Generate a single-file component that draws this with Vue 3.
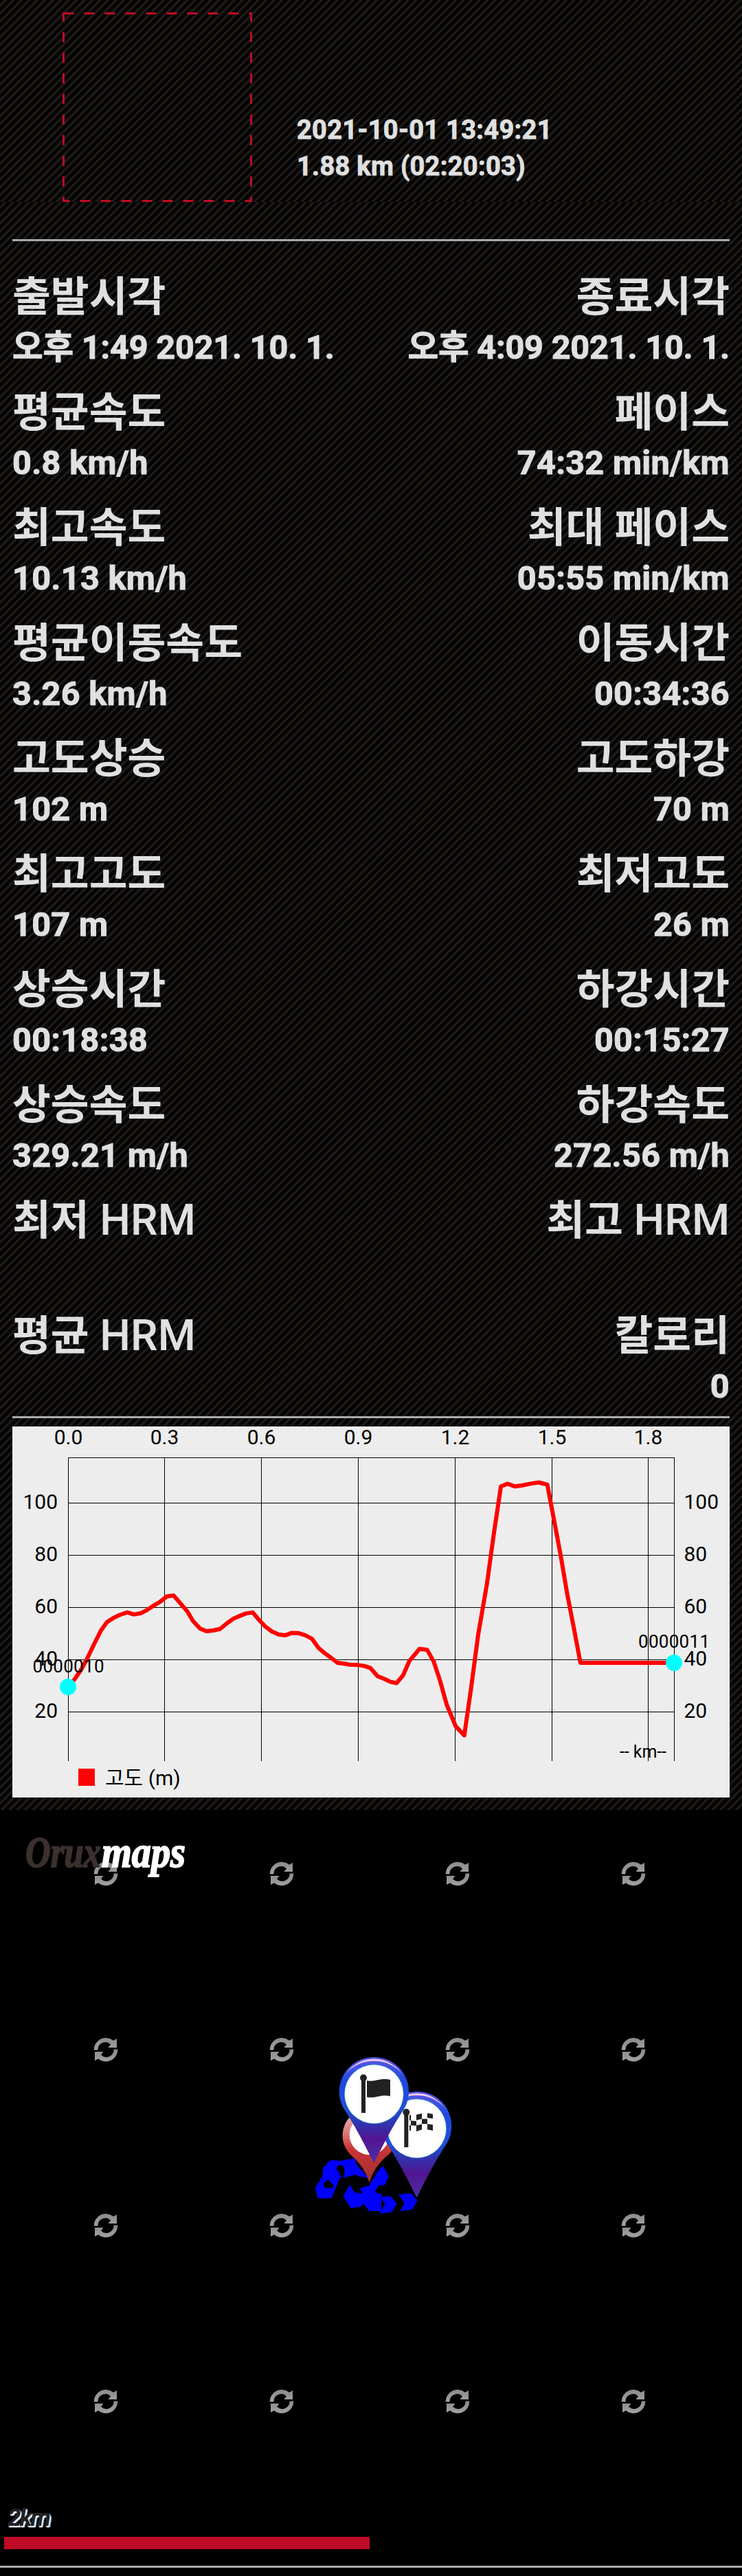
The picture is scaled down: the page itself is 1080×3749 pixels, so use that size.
<script setup>
import { computed } from 'vue';

const resumen = {
    fecha: '2021-10-01 13:49:21',
    distancia: '1.88 km (02:20:03)'
};

const filas = [
    [{ nombre: '출발시각', valor: '오후 1:49 2021. 10. 1.' }, { nombre: '종료시각', valor: '오후 4:09 2021. 10. 1.' }],
    [{ nombre: '평균속도', valor: '0.8 km/h' }, { nombre: '페이스', valor: '74:32 min/km' }],
    [{ nombre: '최고속도', valor: '10.13 km/h' }, { nombre: '최대 페이스', valor: '05:55 min/km' }],
    [{ nombre: '평균이동속도', valor: '3.26 km/h' }, { nombre: '이동시간', valor: '00:34:36' }],
    [{ nombre: '고도상승', valor: '102 m' }, { nombre: '고도하강', valor: '70 m' }],
    [{ nombre: '최고고도', valor: '107 m' }, { nombre: '최저고도', valor: '26 m' }],
    [{ nombre: '상승시간', valor: '00:18:38' }, { nombre: '하강시간', valor: '00:15:27' }],
    [{ nombre: '상승속도', valor: '329.21 m/h' }, { nombre: '하강속도', valor: '272.56 m/h' }],
    [{ nombre: '최저', sigla: 'HRM', valor: '' }, { nombre: '최고', sigla: 'HRM', valor: '' }],
    [{ nombre: '평균', sigla: 'HRM', valor: '' }, { nombre: '칼로리', valor: '0' }]
];

const ejeX = [
    { x: 81.5, texto: '0.0' },
    { x: 221.5, texto: '0.3' },
    { x: 362.5, texto: '0.6' },
    { x: 503.5, texto: '0.9' },
    { x: 644.5, texto: '1.2' },
    { x: 785.5, texto: '1.5' },
    { x: 925.5, texto: '1.8' }
];

const ejeY = [
    { y: 111.5, texto: '100' },
    { y: 187.5, texto: '80' },
    { y: 263.5, texto: '60' },
    { y: 339.5, texto: '40' },
    { y: 415.5, texto: '20' }
];

const perfil = [
    [81.2, 378.9], [90.5, 368.1], [100.8, 352.8], [109.4, 336.8], [119.1, 316.5], [128.7, 297.3], [137.7, 284.7],
    [147.3, 278.6], [156.9, 274], [167.3, 270.6], [176.9, 273.6], [187.3, 271.7], [196.2, 267.1], [205.9, 260.6],
    [215.5, 254.9], [225.1, 247.2], [234.8, 246.1], [244.4, 257.2], [254.8, 269.4], [263, 283.2], [273, 293.9],
    [282.6, 298.1], [291.9, 297], [302.3, 294.7], [312.6, 286.3], [321.2, 280.1], [330.5, 275.9], [340.2, 272.1],
    [349.8, 270.6], [358.8, 281.3], [367.7, 290.8], [378, 298.5], [387.7, 302.7], [397.3, 303.9], [407, 300.4],
    [416.6, 300.8], [426.3, 303.9], [435.9, 308.8], [445.5, 322.2], [454.5, 329.9], [464.1, 336.8], [473.4, 344],
    [483.1, 345.2], [491.7, 346.7], [502.7, 347.1], [512.3, 348.6], [521.3, 351.7], [531.6, 363.5], [540.6, 367],
    [550.2, 371.6], [559.2, 373.5], [568.8, 362], [577.8, 341.4], [592.6, 323.8], [603.6, 324.9], [613.3, 342.1],
    [622.6, 370.4], [632.2, 404.9], [645.3, 436.3], [657.8, 449.6], [667.7, 380.8], [678, 303.1], [690.7, 229.6],
    [700.4, 158.8], [711.1, 87.3], [720.7, 83.4], [731.7, 87.3], [742.4, 85.7], [755.1, 83.1], [766.2, 81.5],
    [778.6, 84.6], [788.2, 135.1], [798.2, 188.3], [807.8, 244.9], [817.8, 296.2], [826.8, 344], [963, 344]
];

const puntos = computed(() => perfil.map((p) => p.join(',')).join(' '));
</script>

<template>
    <div class="pantalla">
        <div class="panel">
            <header class="cabecera">
                <svg class="marco" width="276" height="276" viewBox="0 0 276 276">
                    <rect x="1.5" y="1.5" width="273" height="273" fill="none" stroke="#be0b26" stroke-width="3" stroke-dasharray="15 15" />
                </svg>
                <div class="resumen">
                    <p>{{ resumen.fecha }}</p>
                    <p>{{ resumen.distancia }}</p>
                </div>
            </header>
            <hr class="linea">

            <div class="datos">
                <div class="fila" v-for="(fila, i) in filas" :key="i">
                    <div class="dato" v-for="dato in fila" :key="dato.nombre">
                        <div class="nombre">{{ dato.nombre }}<span class="sigla" v-if="dato.sigla">&nbsp;{{ dato.sigla }}</span></div>
                        <div class="valor">{{ dato.valor }}</div>
                    </div>
                </div>
            </div>
            <hr class="linea">

            <svg class="grafica" width="1044" height="540" viewBox="0 0 1044 540">
                <g stroke="#000" stroke-width="1" shape-rendering="crispEdges">
                    <line x1="81" y1="45.5" x2="964" y2="45.5" />
                    <line v-for="m in ejeY" :key="m.texto" x1="81" :y1="m.y" x2="964" :y2="m.y" />
                    <line v-for="m in ejeX" :key="m.texto" :x1="m.x" y1="45" :x2="m.x" y2="487" />
                    <line x1="963.5" y1="45" x2="963.5" y2="487" />
                </g>
                <g class="escala">
                    <text v-for="m in ejeX" :key="m.texto" :x="m.x" y="26" text-anchor="middle">{{ m.texto }}</text>
                    <text v-for="m in ejeY" :key="m.texto" x="66" :y="m.y + 8.5" text-anchor="end">{{ m.texto }}</text>
                    <text v-for="m in ejeY" :key="m.texto" x="977.5" :y="m.y + 8.5">{{ m.texto }}</text>
                </g>
                <polyline :points="puntos" fill="none" stroke="#f00" stroke-width="6" stroke-linejoin="round" />
                <circle cx="81" cy="379" r="12" fill="#0ff" />
                <circle cx="963" cy="344" r="12" fill="#0ff" />
                <text class="punto" x="81.5" y="358" text-anchor="middle" textLength="104">0000010</text>
                <text class="punto" x="963" y="322" text-anchor="middle" textLength="104">0000011</text>
                <text class="unidad" x="884" y="482" textLength="68">-- km--</text>
                <rect x="96" y="498" width="24" height="25" fill="#f00" />
                <text class="leyenda" x="135" y="522">고도 (m)</text>
            </svg>
        </div>

        <div class="mapa">
            <div class="teselas">
                <svg v-for="n in 16" :key="n" width="36" height="36" viewBox="-18 -18 36 36">
                    <defs>
                        <linearGradient id="gris" x1="0" y1="0" x2="0" y2="1">
                            <stop offset="0" stop-color="#8a8a8a" />
                            <stop offset="1" stop-color="#a2a2a2" />
                        </linearGradient>
                    </defs>
                    <g fill="url(#gris)">
                        <path d="M-17.3 .5A17.3 17.3 0 0 1 11-13.2L16-16V-3H3.5L7-7.6A10.8 10.8 0 0 0-11.5 .5Z" />
                        <path d="M17.3-.5A17.3 17.3 0 0 1-11 13.2L-16 16V3H-3.5L-7 7.6A10.8 10.8 0 0 0 11.5-.5Z" />
                    </g>
                </svg>
            </div>

            <svg class="logo" width="260" height="80" viewBox="0 0 260 80">
                <text x="3" y="53" fill="#3a302d" stroke="#3a302d" textLength="110" lengthAdjust="spacingAndGlyphs">Orux</text>
                <text x="114" y="53" fill="#fff" stroke="#fff" textLength="122" lengthAdjust="spacingAndGlyphs">maps</text>
            </svg>

            <svg class="marcas" width="240" height="270" viewBox="0 0 720 810">
                <defs>
                    <linearGradient id="azul" x1="0" y1="0" x2="0" y2="1">
                        <stop offset="0" stop-color="#5a5ae0" />
                        <stop offset=".22" stop-color="#2348e0" />
                        <stop offset=".5" stop-color="#1d4fd6" />
                        <stop offset=".62" stop-color="#2f35b0" />
                        <stop offset=".77" stop-color="#521591" />
                        <stop offset="1" stop-color="#4b2ea6" />
                    </linearGradient>
                    <linearGradient id="rojo" x1="0" y1="0" x2="0" y2="1">
                        <stop offset="0" stop-color="#f2c4c4" />
                        <stop offset=".3" stop-color="#dc8080" />
                        <stop offset=".55" stop-color="#c93434" />
                        <stop offset="1" stop-color="#a03030" />
                    </linearGradient>
                    <linearGradient id="brillo" x1="0" y1="0" x2="0" y2="1">
                        <stop offset="0" stop-color="#ffd0f6" />
                        <stop offset=".5" stop-color="#e0b0f0" />
                        <stop offset="1" stop-color="#3a6cf0" />
                    </linearGradient>
                    <g id="pin">
                        <path d="M0-152A150 150 0 0 1 130 76C95 130 70 170 0 311C-70 170-95 130-130 76A150 150 0 0 1 0-152Z" fill="url(#azul)" />
                        <path d="M-128-72A149 149 0 0 1 128-72A158 154 0 0 0-128-72Z" fill="url(#brillo)" />
                        <circle cx="0" cy="9" r="129" fill="#fff" stroke="#2a86c0" stroke-width="2" />
                        <rect x="-55" y="-62" width="18" height="153" fill="#222" />
                        <circle cx="-46" cy="-62" r="15" fill="#222" />
                    </g>
                </defs>
                <g fill="#00f">
                    <path d="M91 556L122 521L168 524L228 514L240 545L290 600L246 592L236 584L182 598L176 592L162 604L128 688L68 688L56 645L88 590Z" />
                    <path d="M206 628L228 662L264 667L250 645L292 632L330 570L352 546L378 592L360 630L334 632L318 655L328 668L350 668L346 682L384 678L413 710L392 748L338 755L342 744L292 743L266 710L258 724L212 731L180 680Z" />
                    <path d="M420 671L474 666L503 697L480 737L428 744L446 708Z" />
                </g>
                <g fill="#000">
                    <path d="M148 556L164 540L184 552L184 584L172 600L162 580Z" />
                    <path d="M92 624L112 606L138 634L130 644L98 642Z" />
                    <path d="M346 684L360 716L344 740Z" />
                </g>
                <path d="M293 620C270 550 240 525 205 492A118 118 0 1 1 382 492C345 525 315 550 293 620Z" fill="url(#rojo)" />
                <circle cx="293" cy="411" r="87" fill="#fff" />
                <g transform="translate(500 374)">
                    <use href="#pin" />
                    <path d="M-32-50h6v24h-6zM-2-51l24-6v24l-24 6zM46-58l24 4v20l-24-3zM-26-25l24 2v20l-24-2zM22-33l24 0v22l-24 0zM-32-6h6v24h-6zM-2-4l24-6v24l-24 8zM46-11l24 4v25l-24-4z" fill="#222" />
                </g>
                <g transform="translate(313 224)">
                    <use href="#pin" />
                    <path d="M-31-50C0-42 28-64 71-54V18C30 8 5 30-31 22Z" fill="#222" />
                </g>
            </svg>

            <div class="escala_mapa">
                <span>2km</span>
                <div class="barra"></div>
            </div>
            <hr class="linea_final">
        </div>
    </div>
</template>

<style>
    body {
        margin: 0;
        background: #000;
    }
</style>

<style scoped>
    .pantalla {
        --rayas: repeating-linear-gradient(135deg, #050403 0, #050403 3.6px, #201f1d 5.2px, #201f1d 6.4px, #050403 8.13px);
        width: 1080px;
        height: 3749px;
        display: flex;
        flex-direction: column;
        overflow: hidden;
        color: #e0e0e0;
        font-family: Roboto, "Noto Sans CJK KR", sans-serif;
    }

    .panel {
        height: 2634px;
        box-sizing: border-box;
        padding: 18px 18px 0;
        background-color: #050403;
        background-image: var(--rayas), var(--rayas);
        background-size: 1080px 294px, 1080px 2340px;
        background-position: 0 0, 0 294px;
        background-repeat: no-repeat;
    }

    .cabecera {
        display: flex;
        height: 330px;
        padding-left: 73px;
    }

    .resumen {
        margin-left: 65px;
        padding-top: 145px;
        font-size: 38px;
        font-weight: bold;
        line-height: 53px;
        letter-spacing: 0.3px;
        -webkit-text-stroke: 0.8px #e0e0e0;
    }

    .resumen p {
        margin: 0;
    }

    .linea {
        height: 3px;
        margin: 0;
        border: none;
        background: #aaa;
    }

    .datos {
        padding-top: 30px;
    }

    .fila {
        display: flex;
        justify-content: space-between;
        height: 168px;
    }

    .dato:last-child {
        text-align: right;
    }

    .nombre {
        height: 96px;
        line-height: 104px;
        font-size: 60.7px;
        font-weight: bold;
        white-space: nowrap;
    }

    .sigla {
        font-size: 63px;
        font-weight: 500;
        line-height: 1;
    }

    .valor {
        height: 72px;
        line-height: 58px;
        font-size: 48.5px;
        font-weight: bold;
        letter-spacing: 0.35px;
        white-space: nowrap;
        -webkit-text-stroke: 1px #e0e0e0;
    }

    .fila:first-child .valor {
        letter-spacing: -0.15px;
    }

    .grafica {
        display: block;
        margin-top: 12px;
        overflow: visible;
        background: rgba(240, 240, 240, 0.99);
    }

    .escala, .leyenda {
        font-size: 30px;
        fill: #000;
    }

    .punto {
        font-size: 26px;
    }

    .unidad {
        font-size: 25px;
    }

    .mapa {
        position: relative;
        flex: 1;
        display: flex;
        flex-direction: column;
        background: #000;
    }

    .teselas {
        display: grid;
        grid-template-columns: repeat(4, 36px);
        gap: 220px;
        padding: 75px 0 0 135.5px;
    }

    .teselas svg {
        display: block;
    }

    .logo {
        position: absolute;
        left: 34px;
        top: 30px;
        overflow: visible;
        font: italic bold 64px "Liberation Serif", serif;
        stroke-width: 2px;
    }

    .marcas {
        position: absolute;
        left: 440px;
        top: 336px;
    }

    .escala_mapa {
        margin-top: auto;
        padding-left: 6px;
    }

    .escala_mapa span {
        display: block;
        padding-left: 5px;
        font-size: 35px;
        font-style: italic;
        font-weight: bold;
        line-height: 40px;
        letter-spacing: -2px;
        color: #222;
        text-shadow: 2px 2px 2px #fff, 2px 2px 1px #ccc;
    }

    .barra {
        width: 532px;
        height: 18px;
        margin-top: 7px;
        background: #be0b26;
    }

    .linea_final {
        width: 100%;
        height: 3px;
        margin: 24px 0 12px;
        border: none;
        background: #aaa;
    }
</style>
